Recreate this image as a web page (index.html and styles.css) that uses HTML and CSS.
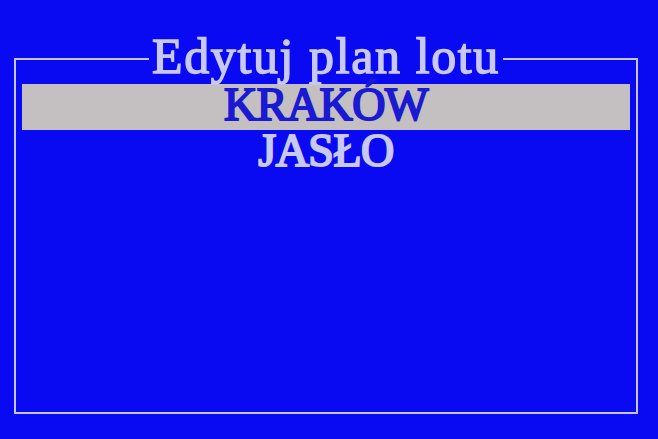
FILE: index.html
```html
<!DOCTYPE html>
<html lang="pl">
<head>
<meta charset="utf-8">
<title>Edytuj plan lotu</title>
<link rel="stylesheet" href="styles.css">
</head>
<body>
<div class="screen">
  <fieldset class="frame">
    <legend class="title">Edytuj plan lotu</legend>
    <ul class="list">
      <li class="item selected">KRAKÓW</li>
      <li class="item">JASŁO</li>
    </ul>
  </fieldset>
</div>
</body>
</html>
```
FILE: styles.css
```css
html, body {
  margin: 0;
  padding: 0;
  background: #0a0af2;
}
.screen {
  width: 658px;
  height: 439px;
  box-sizing: border-box;
  padding: 36px 20px 0 14px;
  font-family: "Liberation Serif", "Times New Roman", serif;
  font-weight: normal;
}
.frame {
  margin: 0;
  height: 378px;
  box-sizing: border-box;
  border: 2px solid #c4c4f2;
  padding: 2px 6px 0 6px;
}
.title {
  margin: 0 auto;
  padding: 0 3px 6px 3px;
  font-size: 50px;
  line-height: 40px;
  letter-spacing: 1.6px;
  color: #c8c8f4;
  -webkit-text-stroke: 1.4px #c8c8f4;
}
.list {
  list-style: none;
  margin: 0;
  padding: 0;
}
.item {
  height: 46px;
  line-height: 42px;
  padding-bottom: 4px;
  box-sizing: border-box;
  text-align: center;
  font-size: 46px;
  letter-spacing: -0.5px;
  color: #c8c8f4;
  -webkit-text-stroke: 2px #c8c8f4;
}
.item.selected {
  background: #c4c0c2;
  color: #1a1ad2;
  -webkit-text-stroke: 2px #1a1ad2;
}
```
